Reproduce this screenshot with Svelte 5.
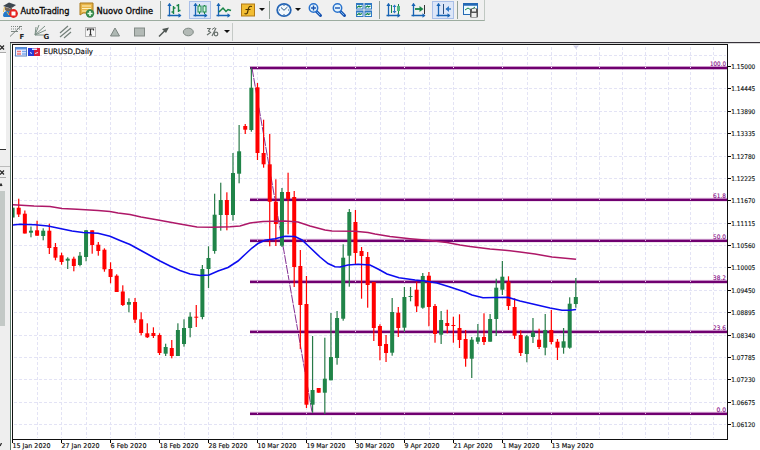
<script>
  const arrow = 'arrow', sep = 'sep';
  const mainTools = [
    ['robot', 2], ['text:AutoTrading', 2, 58, 49], ['order', 1], ['text:Nuovo Ordine', 1, 60, 56.5], [sep, 4],
    ['bars', 5], ['candles', 7, 22, 1], ['line', 4], ['fx', 9], [arrow, 3], [sep, 4],
    ['clock', 6], [arrow, 3], ['zoomin', 6], ['zoomout', 8], ['tiles', 9], [sep, 7],
    ['autoscale', 5], ['scroll', 9], ['shift', 6, 22, 1], [sep, 3], ['template', 5]
  ];
  const drawTools = [
    ['fan', 9], ['gann', 9], ['channel', 7], ['label', 9], ['triangle', 9], ['rect', 8],
    ['pointer', 8], ['ellipse', 9], ['cycles', 8], [arrow, 4], [sep, 2]
  ];

  // wick top, body top, body bottom, wick bottom, 1 = rising
  const candles = [
    [207.7,207.7,217.5,217.5,1],[198.7,207.7,214.5,217,0],[210.5,213.7,233.5,233.5,0],[226.5,230.7,232.7,237.3,1],
    [220.7,230.3,235.7,235.7,0],[228.3,230.7,236,240.3,1],[223.7,230.7,248,254,0],[243,247,257.7,260.3,0],
    [252.7,255.3,262,264.7,0],[257.3,258.7,260.7,269,1],[256.7,258.7,266,271.3,0],[252,255.7,265,266.3,1],
    [230,230.3,257,261.3,1],[230.3,230.3,245,253.7,0],[242,244.7,251,255.7,0],[248.3,249.7,269.3,271.7,0],
    [262.3,269,277,283.3,0],[274.3,275.7,292,292,0],[285.3,291.5,305,306,0],[298.3,302,304.7,312.3,1],
    [298,302,319.7,323,0],[312.3,319.3,333,335.3,0],[323.3,333.3,337.3,338,0],[327.3,333,336,338,0],
    [333.3,335,353,355,0],[343.7,347,353.7,356,1],[340,348,356,358.3,0],[323.3,330,356,356,1],
    [319.3,328,344,346.7,1],[312.3,316.7,328,337.3,1],[305,316.7,317.7,327,0],[265,269,317,319.3,1],
    [246.3,258,269,288,1],[193.7,214.7,251,253.7,1],[182.7,200,215,230.7,1],[192.3,200,215,230.3,0],
    [153,173,215,220.7,1],[125,151.3,173.7,183.3,1],[124,126,129.7,134,0],[67.7,87.7,130,131.7,1],
    [83,87.3,153,160,0],[119.7,153,164.3,167.7,0],[134,164.3,201.7,246.3,0],[179.3,201.7,224,246,0],
    [188,192,245.7,247,1],[172.7,192,199,234.3,0],[191,197,267,287,0],[250,266,305,349,0],
    [276,304,404.7,408,0],[336,390,404.7,412.7,1],[388,388,392.7,392.7,0],[337.7,378.7,392.7,414,1],
    [313,357,380.3,380.3,1],[311,318,358,364.7,1],[244.3,257.7,318.7,320.7,1],[209,212,255.7,286.7,1],
    [210,222,253,264.3,0],[247,251,256,298.7,0],[252,257,285,307.7,0],[282,282,328,341,0],
    [324.3,326,346,360.3,0],[335,344,353,362,0],[298,312,352.7,355.7,1],[307,312.7,328,337,0],
    [287,297,327.7,331.7,1],[287,296,297,301.3,1],[281.7,289.7,306.3,312,0],[273,276,307.7,308.7,1],
    [272,275.7,307,326.3,0],[304,306,334,342.7,0],[311,320,334.7,344,1],[309.7,323,326,333.3,0],
    [316.7,325,326,342.7,0],[314.3,328,340,348,0],[330,339,358.7,366.7,0],[337,339.7,358.7,378,1],
    [324,337.3,341.7,344,1],[313.3,337,342,345,0],[314,319,341.7,341.7,1],[278.7,287.7,319,336,1],
    [261,276.7,289.7,295,1],[276.3,281.7,306,310,0],[298.3,307,335.7,339,0],[330.3,335,353,356,0],
    [335,336.3,354,362.3,1],[318,332.3,337,343,1],[328.7,339.7,347,349,0],[314,330,347.7,355.3,1],
    [310,330,342,344.3,0],[339,341.7,347.7,360,0],[328,341.3,347.7,353.7,1],[297.3,303.7,347.7,348.7,1],
    [278,297,304,307.7,1]
  ];
  const cx = (i) => 12.6 + i * 6.122;
  const slow = '13,204.7 34,206 50,206.5 62,208.5 77,209.3 98,210.5 110,211.5 118,213 130,214.5 141,217 158,220 180,224 197,227 213,227.3 230,226.7 240,226 250,223 263,221.5 285,221 298,222 310,226 325,230 332,230.9 355,231.2 368,232.5 375,234 390,236.5 410,238.7 430,240.5 447,242.5 460,245 470,246.5 490,249 505,250.2 520,252 535,254 552,257 568,258.5 576,259.3';
  const fast = '13,225 20,224.3 35,224.7 48,226 60,228.5 72,231 83,232.5 98,233.3 110,236.3 120,240.5 130,244.5 140,250 150,255.5 160,261 170,266 180,270.5 190,274 200,275.5 209,275 218,271 228,267.5 238,261 245,254.5 252,248 258,243.5 265,240.3 275,238.7 285,236.3 295,236.5 302,240 310,247.5 320,257 328,263.5 335,266.7 340,267 348,265 358,264.3 370,265 378,269 387,274 399,277.7 415,280 425,281 437,283 450,287 465,292 472,295 483,297.7 508,297.3 520,301 535,304.5 550,308 562,310.3 570,310.3 576,309.5';
  const gridX = [...Array.from({ length: 23 }, (_, i) => 37 + i * 24.5), 599, 622, 645, 668, 690.5, 713.5];
  const prices = Array.from({ length: 17 }, (_, i) => ({ y: 66.5 + i * 22.38, t: (1.15 - i * 0.00555).toFixed(5) }));
  const fibs = [[68, '100.0', 16], [199.8, '61.8', 13], [240.8, '50.0', 13], [281.9, '38.2', 13], [331.9, '23.6', 13], [413.8, '0.0', 9.5]];
  const dates = [['15 Jan 2020', 38], ['27 Jan 2020', 38], ['6 Feb 2020', 36], ['18 Feb 2020', 39], ['28 Feb 2020', 39], ['10 Mar 2020', 39],
    ['19 Mar 2020', 39], ['30 Mar 2020', 39], ['9 Apr 2020', 35], ['21 Apr 2020', 39], ['1 May 2020', 37], ['13 May 2020', 42]];
</script>

{#snippet axes()}
  <path d="M3.500 1.500v13M1.500 13.500h13" stroke="#1663b4" fill="none" stroke-width="1.300" />
  <path d="M1.300 4l2.200-3 2.200 3zM12.500 11.300l3 2.200-3 2.200z" fill="#1663b4" />
{/snippet}

{#snippet glass()}
  <path d="M9 9l4.500 4.500" stroke="#1852b0" stroke-width="3" stroke-linecap="round" />
  <path d="M10 10l3 3" stroke="#6fb5ee" stroke-width="1" />
  <circle cx="6.500" cy="6" r="4.200" fill="#e4f4fd" stroke="#2a72cc" stroke-width="1.500" />
  <path d="M4 6h5" stroke="#1852b0" stroke-width="1.400" />
{/snippet}

{#snippet icon(id)}
  <svg class="icon" width="16" height="16" viewBox="0 0 16 16">
    {#if id === 'robot'}
      <path d="M1 4l6-3.500 7 2.500-5 3.500z" fill="#3d4650" />
      <path d="M3 5v3q3 3 7 0V4.500L8 6.500z" fill="#75655a" />
      <path d="M1 14q0-5 5-5t5 5v1H2z" fill="#2378ca" />
      <path d="M2.500 5l-1 5M5 10l2 3 1-3" stroke="#e8bd4c" fill="none" />
      <circle cx="11.500" cy="11.500" r="4.400" fill="#e62222" />
      <rect x="9.500" y="9.500" width="4" height="4" fill="#fff" />
    {:else if id === 'order'}
      <path d="M1 1h13v10H4l-3 2z" fill="#e8b548" stroke="#ab7a1e" />
      <path d="M3 4h9M3 6.500h9M3 9h5" stroke="#fff2bd" stroke-width="1.200" />
      <circle cx="11" cy="11.500" r="4.200" fill="#35884a" />
      <path d="M8.500 11.500h5M11 9v5" stroke="#e6ffe8" stroke-width="1.600" />
    {:else if id === 'bars'}
      {@render axes()}
      <path d="M7.500 4v8M5.500 10h2M7.500 6h2M12.500 2v8M10.500 3.500h2M12.500 8.500h2" stroke="#188548" stroke-width="1.400" fill="none" />
    {:else if id === 'candles'}
      {@render axes()}
      <path d="M7.500 2v10M12.500 3v9" stroke="#188548" />
      <rect x="6" y="4" width="3" height="6" fill="#d3f7e0" stroke="#188548" /><rect x="11" y="4" width="3" height="6" fill="#d3f7e0" stroke="#188548" />
    {:else if id === 'line'}
      {@render axes()}
      <path d="M4 10l4-4 3 3.500 2-2 3 1" stroke="#188548" stroke-width="1.500" fill="none" />
    {:else if id === 'fx'}
      <rect x="1.500" y="2" width="13" height="12" fill="#f2bd32" stroke="#b27a14" />
      <path d="M12 4.500q-3-1-3.500 2l-1 4q-.5 2-3 1M5.500 7.500h5" stroke="#4f3500" stroke-width="1.200" fill="none" />
    {:else if id === 'clock'}
      <ellipse cx="8" cy="8" rx="6.800" ry="6.100" fill="#f3f9fd" stroke="#2565b5" stroke-width="1.800" />
      <path d="M5 5.500l3 2.800 3.500-3.300M8 3v1M8 12v1M3 8h1M12 8h1" stroke="#315e89" fill="none" />
    {:else if id === 'zoomin'}
      {@render glass()}<path d="M6.500 3.500v5" stroke="#1852b0" stroke-width="1.400" />
    {:else if id === 'zoomout'}
      {@render glass()}
    {:else if id === 'tiles'}
      {#each [[0, 1], [8.5, 1], [0, 8.5], [8.5, 8.5]] as [x, y]}
        <rect {x} {y} width="7.500" height="6.500" fill="#2f79c4" />
        <rect x={x + 1} y={y + 2} width="5.500" height="3.500" fill="#f4fcff" />
        <path d="M{x + 1} {y + 4.500}l2-1.500 1 1 2-1" stroke="#188548" stroke-width="1.300" fill="none" />
      {/each}
    {:else if id === 'autoscale'}
      {@render axes()}
      <path d="M6.500 3v8M13.500 2v10" stroke="#188548" /><rect x="12" y="4" width="3" height="5" fill="#50b681" />
      <path d="M7.500 5l2-2.500 2 2.500zM7.500 9l2 2.500 2-2.500zM9 5h1v4H9z" fill="#2b75c4" />
    {:else if id === 'scroll'}
      {@render axes()}
      <path d="M5 7h6" stroke="#188548" stroke-width="1.800" /><path d="M9.500 4l4 3-4 3z" fill="#188548" /><path d="M14.500 3v9" stroke="#333" />
    {:else if id === 'shift'}
      {@render axes()}
      <path d="M8.500 2v10" stroke="#2a4f80" /><path d="M11 7h5" stroke="#2b75c4" stroke-width="1.400" /><path d="M14 4l-3.500 3 3.500 3z" fill="#2b75c4" />
    {:else if id === 'template'}
      <rect x=".5" y="1.500" width="14" height="11" fill="#eefaff" stroke="#2469b5" /><path d="M0 2.500h15" stroke="#2469b5" stroke-width="2.500" />
      <path d="M2 8l3-2 3 2 4-3" stroke="#188548" fill="none" />
      <rect x="7" y="6.500" width="8" height="9" rx="1" fill="#555" /><path d="M9 7h4v2.500H9zM8.500 11h5v4h-5z" fill="#eee" />
    {:else if id === 'fan'}
      <path d="M2 2.500h11M2 5h11" stroke="#7b8580" stroke-dasharray="1 1" />
      <path d="M1 12.500L12 2M2 7.500h7" stroke="#7b8580" fill="none" /><text x="10.500" y="14.500">F</text>
    {:else if id === 'gann'}
      <path d="M1 11L5 1M1 11L11 2M1 11l11-5M1 11L2 3M1 11h9" stroke="#7b8f85" fill="none" /><text x="9.500" y="14.500">G</text>
    {:else if id === 'channel'}
      <path d="M3 9l8-7M3 13L14 4M7 14l7-6" stroke="#737f79" stroke-width="1.200" />
    {:else if id === 'label'}
      <rect x="3.500" y="3.500" width="10" height="9" fill="#f7f7f7" stroke="#777" stroke-dasharray="1 1" />
      <path d="M5.500 6.500V5h6v1.500M8.500 5v6M7 11h3" stroke="#333" stroke-width="1.200" fill="none" />
    {:else if id === 'triangle'}
      <path d="M8 4l4.500 8h-9z" fill="#aeb8b3" stroke="#7b8580" />
    {:else if id === 'rect'}
      <rect x="3.500" y="4" width="10" height="8" fill="#b3bab6" stroke="#838b87" />
    {:else if id === 'pointer'}
      <path d="M4 12.500L10 6.500" stroke="#4f5653" stroke-width="1.400" /><path d="M7 5L14 3.500l-3 5.500z" fill="#4f5653" />
    {:else if id === 'ellipse'}
      <ellipse cx="8.300" cy="8" rx="5" ry="3.800" fill="#b3bab6" stroke="#7f8984" />
    {:else if id === 'cycles'}
      <path d="M3 4.500h3L4.500 7l2 1.500L3 11M12 4l-4 8" stroke="#68716d" stroke-width="1.200" fill="none" />
      <path d="M8 5.500l3-2" stroke="#68716d" /><circle cx="12" cy="10" r="1.800" fill="none" stroke="#68716d" stroke-width="1.200" />
    {/if}
  </svg>
{/snippet}

{#snippet bar(items)}
  {#each items as [id, gap, w, opt]}
    {#if id === sep}
      <i class="sep" style="margin-left:{gap}px"></i>
    {:else if id === arrow}
      <i class="arrow" style="margin-left:{gap}px"></i>
    {:else if id.startsWith('text:')}
      <svg class="caption" width={w} height="16" style="margin-left:{gap}px"><text x="0.500" y="11.500" textLength={opt} lengthAdjust="spacingAndGlyphs">{id.slice(5)}</text></svg>
    {:else}
      <span class="tool" class:active={opt} style="margin-left:{gap}px;width:{w ?? 16}px">{@render icon(id)}</span>
    {/if}
  {/each}
{/snippet}

<div class="app">
  <header class="row main">{@render bar(mainTools)}</header>
  <div class="row draw">{@render bar(drawTools)}</div>
  <div class="body">
    <aside>
      <div class="head"><svg width="5" height="5"><path d="M0 .5l4 4M4 .5l-4 4" /></svg></div>
      <div class="pane"></div>
      <div class="gap"></div>
      <div class="head"><svg width="5" height="5"><path d="M0 .5l4 4M4 .5l-4 4" /></svg></div>
      <div class="up"><svg width="5" height="4"><path d="M0 3l1-2 1 2" /></svg></div>
      <div class="thumb"></div>
      <div class="down"><svg width="5" height="4"><path d="M0 3l1.500-3" /></svg></div>
    </aside>
    <svg class="chart" width="750" height="408" viewBox="10 42 750 408">
      <rect x="10" y="42" width="750" height="408" fill="#fff" />
      <rect x="10" y="42" width="1" height="408" fill="#5f7d6c" />
      <rect x="10" y="42" width="750" height="1" fill="#36323a" />
      <rect x="11" y="43" width="749" height="1" fill="#d8d8d8" />
      <g class="grid">
        {#each gridX as x}<line x1={Math.floor(x) + 0.5} x2={Math.floor(x) + 0.5} y1="47" y2="438" />{/each}
        <line x1="14" x2="726" y1="55.500" y2="55.500" />
        {#each prices as p}<line x1="14" x2="726" y1={Math.floor(p.y) + 0.5} y2={Math.floor(p.y) + 0.5} />{/each}
      </g>
      <path d="M573 45.500h6l-3 3.500z" fill="#d2d2e8" />
      <line class="trend" x1="252" y1="68" x2="312" y2="412" />
      {#each fibs as [y, t, w]}
        <rect x="250" y={y - 2} width="477" height="1" fill="#d6a9d6" />
        <rect x="250" y={y - 1.1} width="477" height="2.400" fill="#700070" />
        {#each gridX.filter((x, i) => x > 250 && i % 2 === 1) as x}<rect x={Math.floor(x)} y={y - 1} width="1" height="1" fill="#f0dcf0" />{/each}
        <text class="fib" x={726 - w} y={y - 1.8} textLength={w} lengthAdjust="spacingAndGlyphs">{t}</text>
      {/each}
      {#each candles as [a, b, c, d, up], i}
        <rect x={cx(i) - 0.6} y={a} width="1.200" height={d - a} fill={up ? '#287a48' : '#f00'} />
        <rect x={Math.max(13, cx(i) - 2)} y={b} width={i ? 4 : 1.6} height={Math.max(1, c - b)} fill={up ? '#208448' : '#f00'} />
      {/each}
      <polyline points={slow} fill="none" stroke="#ae1868" stroke-width="1.500" />
      <polyline points={fast} fill="none" stroke="#0c0cf0" stroke-width="1.600" />
      <path class="frame" d="M12 44.500h716M12.500 44v396M12 439.500h716M727.500 44v396" />
      {#each prices as p}
        <rect x="728" y={Math.floor(p.y)} width="3" height="1" />
        <text class="price" x="731.300" y={p.y + 2.5} textLength="24" lengthAdjust="spacingAndGlyphs">{p.t}</text>
      {/each}
      {#each dates as [t, w], i}
        <rect x={Math.floor(12.3 + i * 49)} y="440" width="1" height="3" />
        <text class="date" x={12.5 + i * 49} y="448" textLength={w} lengthAdjust="spacingAndGlyphs">{t}</text>
      {/each}
      <g transform="translate(15 47)">
        <rect x=".5" y=".5" width="11" height="8.500" fill="#f3f1ff" stroke="#5e82bd" />
        <path d="M1 1.500h10" stroke="#5792e5" stroke-width="2" /><path d="M2 4.500h4M2 7h4" stroke="#ee7777" stroke-width="1.500" /><path d="M7 4.500h4M7 7h4" stroke="#7aa9ef" stroke-width="1.500" />
        <rect x="13" y="1" width="6" height="8" fill="#263bd6" /><rect x="19" y="1" width="6" height="8" fill="#d91e3c" />
        <path d="M17 1.500h5v1.500h-5z" fill="#dce5ff" /><path d="M15 5.500l2 1M20 6.500l3-1" stroke="#dce5ff" />
      </g>
      <text class="title" x="43.500" y="54.300" textLength="49.500" lengthAdjust="spacingAndGlyphs">EURUSD,Daily</text>
    </svg>
  </div>
</div>

<style>
  .app { width: 760px; height: 450px; overflow: hidden; display: flex; flex-direction: column; background: #f0f0f0; font-family: "DejaVu Sans", Verdana, sans-serif; }
  .row { display: flex; align-items: center; box-sizing: border-box; flex: none; }
  .main { width: 485px; height: 21px; padding-bottom: 1px; border-bottom: 1px solid #9cac9f; border-right: 1px solid #c0c8c2; }
  .draw { height: 21px; }
  .tool { height: 18px; display: flex; align-items: center; justify-content: center; box-sizing: border-box; flex: none; }
  .active { background: #dce6f8; border: 1px solid #a9bfe8; }
  .icon { display: block; flex: none; overflow: visible; }
  .icon text { font: bold 7px "DejaVu Sans", sans-serif; fill: #222; }
  .caption { flex: none; overflow: visible; }
  .caption text { font-size: 8.200px; fill: #080808; stroke: #080808; stroke-width: .3px; }
  .sep { width: 1px; height: 18px; background: #91a096; flex: none; }
  .draw .sep { background: #c5cac7; }
  .arrow { width: 0; height: 0; border: 3px solid transparent; border-top-color: #111; border-bottom: 0; flex: none; }
  .body { display: flex; flex: 1; }
  aside { width: 10px; display: flex; flex-direction: column; background: #eee; }
  aside svg { display: block; fill: none; stroke: #222; stroke-width: 1.200; }
  .head { height: 11px; width: 6px; padding-top: 3px; box-sizing: border-box; border-bottom: 1px solid #aaa; }
  .pane { height: 96px; width: 6px; background: #fff; border-bottom: 1px solid #333; }
  .gap { height: 16px; border-bottom: 1px solid #bbb; }
  .up { height: 13px; width: 6px; padding-top: 5px; box-sizing: border-box; }
  .thumb { width: 5px; height: 135px; background: #c3c9c6; }
  .down { padding-top: 117px; }
  .chart { display: block; flex: none; }
  .grid line { stroke: #e3e3f5; stroke-width: 1; stroke-dasharray: 3 2; }
  .trend { stroke: #843094; stroke-width: 1; stroke-dasharray: 9 1; }
  .frame { fill: none; stroke: #111; stroke-width: 1; }
  .fib { font-size: 6.200px; fill: #800080; stroke: #800080; stroke-width: .1px; }
  .price { font-size: 6.400px; fill: #152019; stroke: #152019; stroke-width: .15px; }
  .date { font-size: 6.600px; fill: #101010; stroke: #101010; stroke-width: .15px; }
  .title { font-size: 7.400px; fill: #080808; stroke: #080808; stroke-width: .15px; }
</style>
